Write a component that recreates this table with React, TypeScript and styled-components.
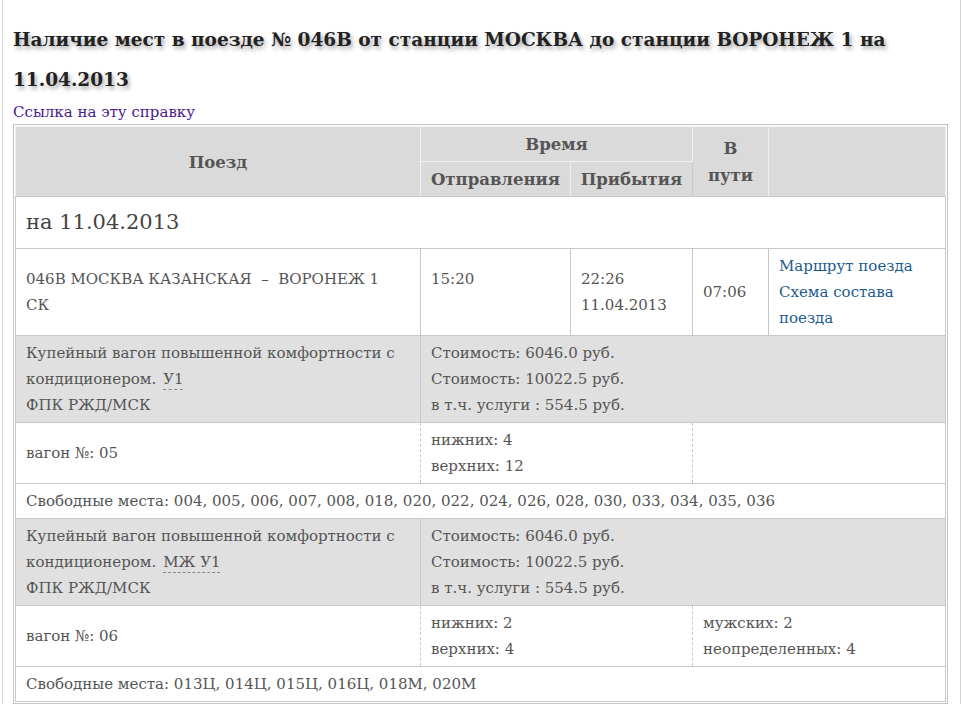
import React from 'react';
import styled, { createGlobalStyle } from 'styled-components';

const GlobalStyle = createGlobalStyle`
  html, body {
    margin: 0;
    padding: 0;
    background: #ffffff;
  }
  body {
    font-family: "DejaVu Serif", "Liberation Serif", serif;
    color: #555;
  }
`;

const Page = styled.div`
  margin: 0 1px 0 2px;
  min-height: 704px;
  border-left: 1px solid #d4d4d4;
  border-right: 1px solid #d4d4d4;
  padding: 20px 10px 0 10px;
  box-sizing: border-box;
`;

const Title = styled.h2`
  margin: 0;
  font-size: 18.5px;
  line-height: 40px;
  font-weight: bold;
  color: #222;
  text-shadow: 2px 3px 4px rgba(0, 0, 0, 0.35);
`;

const RefLink = styled.a`
  display: block;
  font-size: 15px;
  line-height: 21px;
  color: #4b1a8b;
  text-decoration: none;
  margin: 2px 0 1px;
`;

const TableFrame = styled.div`
  width: 935px;
  box-sizing: border-box;
  border: 1px solid #c4c4c4;
  padding: 1px;
`;

const Table = styled.table`
  width: 100%;
  border-collapse: collapse;
  table-layout: fixed;
  font-size: 15px;
  line-height: 26px;
`;

const Th = styled.th<{ $group?: boolean; $sep?: boolean }>`
  background: #dadada;
  color: #555;
  font-size: 16.5px;
  font-weight: bold;
  line-height: 27px;
  text-align: center;
  vertical-align: middle;
  padding: 4px 6px 3px;
  border: 1px solid #f0f0f0;
  border-bottom-color: ${p => (p.$group ? '#f0f0f0' : '#c8c8c8')};
  ${p => p.$sep && 'border-left-color: #c8c8c8;'}
`;

const Td = styled.td<{ $shade?: boolean; $dashRight?: boolean; $dashBottom?: boolean; $dashLeft?: boolean }>`
  padding: 4px 10px;
  vertical-align: middle;
  text-align: left;
  background: ${p => (p.$shade ? '#e0e0e0' : '#fff')};
  border: 1px solid #c8c8c8;
  ${p => p.$dashRight && 'border-right: 1px dashed #c8c8c8;'}
  ${p => p.$dashLeft && 'border-left: 1px dashed #c8c8c8;'}
  ${p => p.$dashBottom && 'border-bottom: 1px dashed #c8c8c8;'}
`;

const DateCell = styled.td`
  padding: 12px 10px 13px;
  font-size: 21px;
  line-height: 26px;
  border: 1px solid #c8c8c8;
  color: #444;
`;

const Line = styled.div`
  min-height: 26px;
`;

const RouteLink = styled.a`
  display: block;
  color: #1d5b8e;
  text-decoration: none;
`;

const Abbr = styled.span`
  margin-left: 7px;
  text-decoration: underline dashed #888;
  text-underline-offset: 5px;
  text-decoration-thickness: 1px;
`;

type Wagon = {
  type: [string, string];
  klass: string;
  number: string;
  lower: number;
  upper: number;
  extra?: string[];
  seats: string;
};

const wagonType: [string, string] = ['Купейный вагон повышенной комфортности с', 'кондиционером.'];

const wagons: Wagon[] = [
  {
    type: wagonType,
    klass: 'У1',
    number: '05',
    lower: 4,
    upper: 12,
    seats: '004, 005, 006, 007, 008, 018, 020, 022, 024, 026, 028, 030, 033, 034, 035, 036',
  },
  {
    type: wagonType,
    klass: 'МЖ У1',
    number: '06',
    lower: 2,
    upper: 4,
    extra: ['мужских: 2', 'неопределенных: 4'],
    seats: '013Ц, 014Ц, 015Ц, 016Ц, 018М, 020М',
  },
];

const WagonRows: React.FC<{ w: Wagon }> = ({ w }) => (
  <>
    <tr>
      <Td $shade>
        <Line>{w.type[0]}</Line>
        <Line>
          <span>{w.type[1]}</span>
          <Abbr>{w.klass}</Abbr>
        </Line>
        <Line>ФПК РЖД/МСК</Line>
      </Td>
      <Td $shade colSpan={4}>
        <Line>Стоимость: 6046.0 руб.</Line>
        <Line>Стоимость: 10022.5 руб.</Line>
        <Line>в т.ч. услуги : 554.5 руб.</Line>
      </Td>
    </tr>
    <tr>
      <Td $dashRight $dashBottom>вагон №: {w.number}</Td>
      <Td colSpan={2} $dashRight $dashLeft $dashBottom>
        <Line>нижних: {w.lower}</Line>
        <Line>верхних: {w.upper}</Line>
      </Td>
      <Td colSpan={2} $dashLeft $dashBottom>
        {w.extra?.map(e => <Line key={e}>{e}</Line>)}
      </Td>
    </tr>
    <tr>
      <Td colSpan={5}>Свободные места: {w.seats}</Td>
    </tr>
  </>
);

const App: React.FC = () => {
  return (
    <>
      <GlobalStyle />
      <Page>
        <Title>
          Наличие мест в поезде № 046В от станции МОСКВА до станции ВОРОНЕЖ 1 на 11.04.2013
        </Title>
        <RefLink href="#">Ссылка на эту справку</RefLink>
        <TableFrame>
          <Table>
            <colgroup>
              <col style={{ width: 405 }} />
              <col style={{ width: 150 }} />
              <col style={{ width: 122 }} />
              <col style={{ width: 76 }} />
              <col />
            </colgroup>
            <thead>
              <tr>
                <Th rowSpan={2}>Поезд</Th>
                <Th colSpan={2} $group>Время</Th>
                <Th rowSpan={2} $sep>
                  В<br />пути
                </Th>
                <Th rowSpan={2}></Th>
              </tr>
              <tr>
                <Th>Отправления</Th>
                <Th>Прибытия</Th>
              </tr>
            </thead>
            <tbody>
              <tr>
                <DateCell colSpan={5}>на 11.04.2013</DateCell>
              </tr>
              <tr>
                <Td>
                  <Line>046В МОСКВА КАЗАНСКАЯ &nbsp;–&nbsp; ВОРОНЕЖ 1</Line>
                  <Line>СК</Line>
                </Td>
                <Td>
                  <Line>15:20</Line>
                  <Line />
                </Td>
                <Td>
                  <Line>22:26</Line>
                  <Line>11.04.2013</Line>
                </Td>
                <Td>07:06</Td>
                <Td>
                  <RouteLink href="#">Маршрут поезда</RouteLink>
                  <RouteLink href="#">Схема состава поезда</RouteLink>
                </Td>
              </tr>
              {wagons.map(w => (
                <WagonRows key={w.number} w={w} />
              ))}
            </tbody>
          </Table>
        </TableFrame>
      </Page>
    </>
  );
};

export default App;
